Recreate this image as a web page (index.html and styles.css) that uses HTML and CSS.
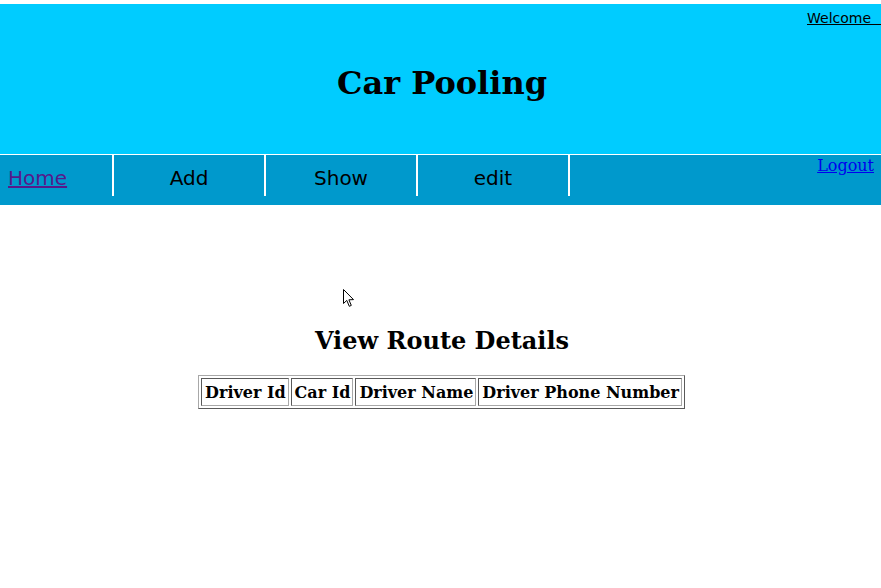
FILE: index.html
```html
<!DOCTYPE html>
<html>
<head>
<meta charset="utf-8">
<title>Car Pooling</title>
<link rel="stylesheet" href="styles.css">
</head>
<body>
<header class="banner">
  <a class="welcome" href="#">Welcome   </a>
  <h1 class="title">Car Pooling</h1>
</header>
<nav class="menu">
  <a class="menu-home" href="#">Home</a>
  <span class="menu-item">Add</span>
  <span class="menu-item">Show</span>
  <span class="menu-item">edit</span>
  <a class="logout" href="#">Logout</a>
</nav>
<main class="content">
  <h2 class="heading">View Route Details</h2>
  <table class="routes">
    <tr>
      <th>Driver Id</th>
      <th>Car Id</th>
      <th>Driver Name</th>
      <th>Driver Phone Number</th>
    </tr>
  </table>
  <svg class="cursor" width="12" height="19" viewBox="0 0 12 19"><path d="M0.5 0.5 L0.5 14.5 L3.8 11.4 L6.3 17.3 L8.3 16.4 L5.9 10.8 L10.5 10.6 Z" fill="#fff" stroke="#000" stroke-width="1"/></svg>
</main>
</body>
</html>
```

FILE: styles.css
```css
html, body {
  margin: 0;
  padding: 0;
  background: #fff;
  font-family: "DejaVu Serif", serif;
  overflow: hidden;
}

.banner {
  position: relative;
  margin-top: 4px;
  height: 150px;
  background: #00ccff;
  display: flex;
  align-items: center;
  justify-content: center;
  overflow: hidden;
}

.welcome {
  position: absolute;
  top: 6px;
  left: 807px;
  font-family: "DejaVu Sans", sans-serif;
  font-size: 14px;
  color: #000;
  white-space: pre;
}

.title {
  margin: 0;
  padding-top: 8px;
  padding-left: 3px;
  font-size: 32px;
  font-weight: bold;
}

.menu {
  position: relative;
  margin-top: 1px;
  height: 50px;
  background: #0099cc;
  display: flex;
  align-items: flex-start;
  font-family: "DejaVu Sans", sans-serif;
  font-size: 20px;
}

.menu-home,
.menu-item {
  height: 41px;
  line-height: 47px;
  border-right: 2px solid #fff;
}

.menu-home {
  width: 104px;
  padding-left: 8px;
  color: #551a8b;
  text-decoration: underline;
}

.menu-item {
  width: 150px;
  text-align: center;
  color: #000;
}

.logout {
  position: absolute;
  top: 1px;
  right: 7px;
  font-family: "DejaVu Serif", serif;
  font-size: 16px;
  color: #0000ee;
}

.content {
  position: relative;
  padding-top: 121px;
  display: flex;
  flex-direction: column;
  align-items: center;
}

.heading {
  margin: 0 0 20px;
  padding-left: 3px;
  font-size: 24px;
  font-weight: bold;
}

.routes {
  border-spacing: 2px;
  font-size: 16px;
  margin-left: 2px;
  border: 1px solid;
  border-color: #a8a8a8 #5a5a5a #5a5a5a #a8a8a8;
}

.routes th {
  padding: 4px 2px 3px 3px;
  font-weight: bold;
  border: 1px solid;
  border-color: #5a5a5a #a8a8a8 #a8a8a8 #5a5a5a;
}

.cursor {
  position: absolute;
  left: 343px;
  top: 84px;
}
```
